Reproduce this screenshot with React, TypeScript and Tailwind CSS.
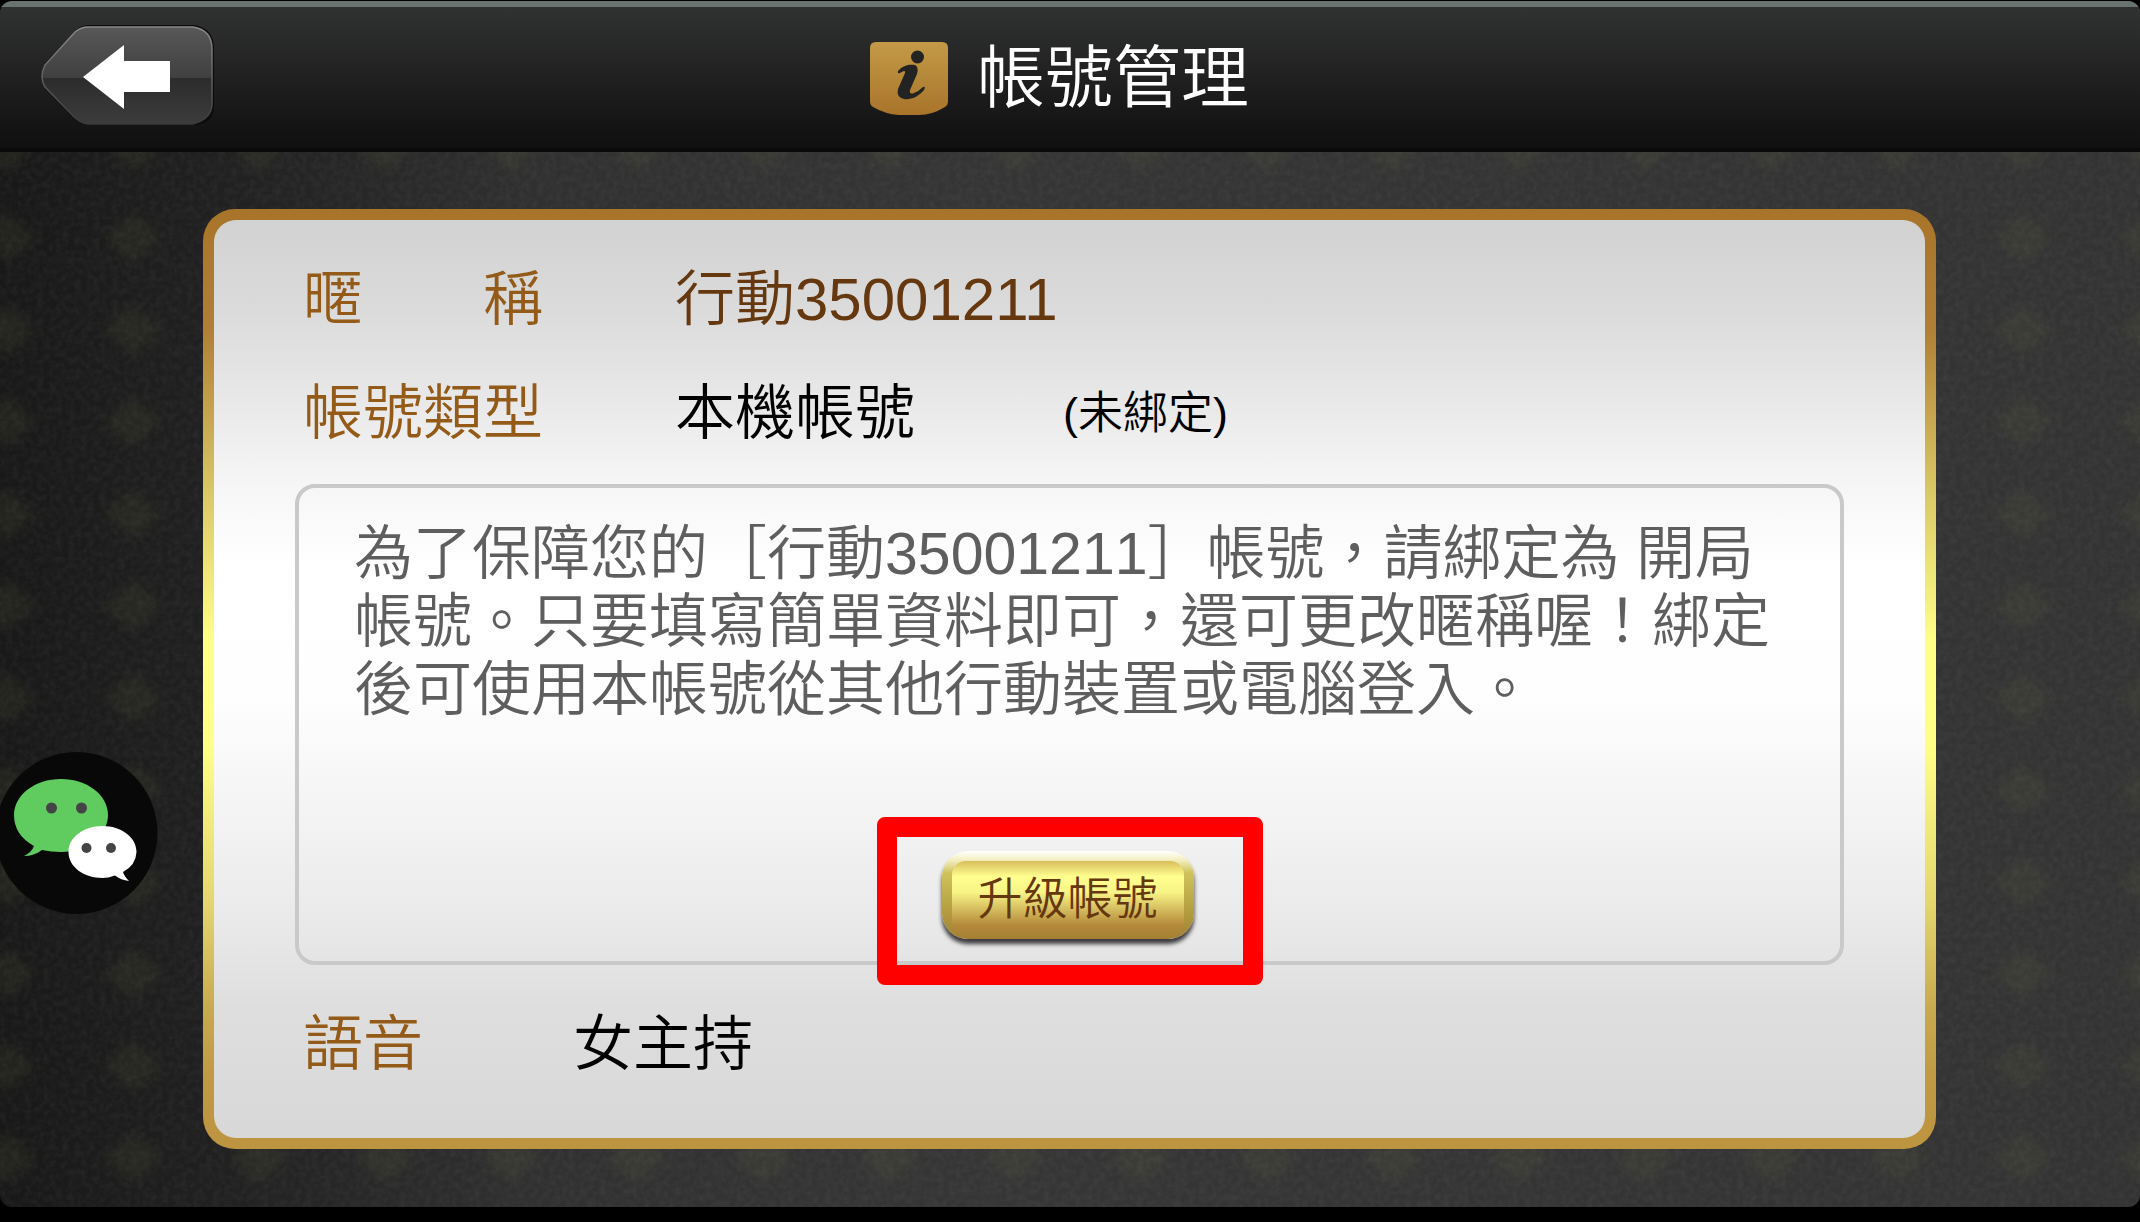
function BackIcon() {
  return (
    <svg viewBox="0 0 176 106" className="h-[106px] w-44" aria-hidden="true">
      <defs>
        <linearGradient id="backFill" x1="0" y1="0" x2="0" y2="1">
          <stop offset="0" stopColor="#585858" />
          <stop offset="0.52" stopColor="#404040" />
          <stop offset="0.53" stopColor="#2c2c2c" />
          <stop offset="1" stopColor="#3c3c3c" />
        </linearGradient>
        <linearGradient id="backEdge" x1="0" y1="0" x2="0" y2="1">
          <stop offset="0" stopColor="#8a8a8a" />
          <stop offset="0.55" stopColor="#5c5c5c" />
          <stop offset="1" stopColor="#3a3a3a" />
        </linearGradient>
      </defs>
      <path d="M49 2H155Q175 5 175 26V84Q174 101 155 102H49Q40 101 34 95L6 66Q-1 54 6 40L36 8Q42 2 49 2Z" fill="#0c0c0c" />
      <path d="M49 4H154Q173 7 173 26V82Q172 96 154 101H49Q41 100 35 94L6 64Q0 54 6 42L36 9Q42 4 49 4Z" fill="url(#backFill)" stroke="url(#backEdge)" strokeWidth="1.6" />
      <path d="M44 54L85 22V38H131V69H85V86Z" fill="#fff" />
    </svg>
  );
}

function InfoIcon() {
  return (
    <svg viewBox="0 0 80 74" className="h-[74px] w-20" aria-hidden="true">
      <defs>
        <linearGradient id="infoFill" x1="0" y1="0" x2="0" y2="1">
          <stop offset="0" stopColor="#c39a47" />
          <stop offset="1" stopColor="#a8742a" />
        </linearGradient>
      </defs>
      <path d="M7 1H73Q79 1 79 7V61Q79 64 76 66Q63 74 50 74H30Q16 73 4 66Q1 64 1 61V7Q1 1 7 1Z" fill="url(#infoFill)" />
      <circle cx="48.5" cy="16" r="6.5" fill="#232323" />
      <path d="M29 30C34 24 41 23 46 24Q50 26 48 33L41 49Q40 54 45 52Q50 50 54 46Q57 45 55 49C49 56 42 59 35 58Q27 56 29 48L36 32Q37 28 31 32Q28 33 29 30Z" fill="#232323" />
    </svg>
  );
}

function ChatIcon() {
  return (
    <svg viewBox="0 0 160 164" className="h-[164px] w-40" aria-hidden="true">
      <circle cx="76.5" cy="82" r="81" fill="#080808" />
      <path d="M61 28C87 28 108 44 108 64S87 101 61 101Q51 101 42 99Q34 105 24 105Q32 101 34 95Q14 84 14 64C14 44 35 28 61 28Z" fill="#60cc5f" />
      <circle cx="51.5" cy="57" r="5.5" fill="#444" />
      <circle cx="81.5" cy="57" r="5.5" fill="#444" />
      <path d="M102.5 75C121 75 136.500 86 136.500 101Q136 114 123 121Q124 125 129 130Q121 129 115 124.500Q108 127 102.500 127C84 127 68.500 116 68.500 101S84 75 102.500 75Z" fill="#fff" />
      <circle cx="86.5" cy="97" r="5" fill="#444" />
      <circle cx="111" cy="97" r="5" fill="#444" />
    </svg>
  );
}

function Texture() {
  return (
    <svg className="absolute inset-0 h-full w-full" aria-hidden="true">
      <defs>
        <filter id="grain" x="0" y="0" width="100%" height="100%">
          <feTurbulence type="fractalNoise" baseFrequency="0.16" numOctaves="3" seed="4" />
          <feColorMatrix type="matrix" values="0 0 0 0 1  0 0 0 0 1  0 0 0 0 1  0.4 0 0 0 -0.12" />
        </filter>
        <filter id="soft">
          <feGaussianBlur stdDeviation="4" />
        </filter>
        <pattern id="diamonds" width="126" height="92" patternUnits="userSpaceOnUse" x="70" y="7">
          <path d="M63 22L90 46L63 70L36 46Z" fill="#6b6b3c" opacity="0.13" filter="url(#soft)" />
        </pattern>
      </defs>
      <rect width="100%" height="100%" fill="url(#diamonds)" />
      <rect width="100%" height="100%" filter="url(#grain)" opacity="0.2" />
    </svg>
  );
}

export default function App() {
  return (
    <div
      lang="zh-Hant"
      className="flex min-h-screen flex-col bg-black pb-[15px] pt-px font-['Liberation_Sans','Noto_Sans_CJK_TC',sans-serif] font-[350]"
    >
      <div className="relative flex grow flex-col overflow-hidden rounded-xl bg-[linear-gradient(90deg,#181818,#202020_10%,#303030_25%,#353535_45%,#333333)]">
        <Texture />
        <header className="relative grid h-[151px] grid-cols-[1fr_auto_1fr] items-center border-b-4 border-t-[6px] border-b-[#0a0a0a] border-t-[#68736f] bg-[linear-gradient(#303231,#222222_45%,#141414_85%,#101010)] pl-[39px] pr-[61px]">
          <button type="button" aria-label="返回" className="w-44 pb-1">
            <BackIcon />
          </button>
          <div className="flex items-center gap-7">
            <InfoIcon />
            <h1 className="text-[68px] leading-[80px] text-white">帳號管理</h1>
          </div>
        </header>

        <main className="relative ml-[203px] mr-[204px] mt-[57px] flex h-[940px] flex-col rounded-[32px] bg-[linear-gradient(#a8742a,#b08036_13%,#dccb68_31%,#ffff87_46%,#ffff87_57%,#e4d56e_74%,#c8aa4e_85%,#c09a45_92%,#bd9440)] p-[11px]">
          <section className="grow rounded-[22px] bg-[linear-gradient(#d2d2d2,#dadada_9%,#e6e6e6_18%,#f6f6f6_29%,#ffffff_38%,#fefefe_52%,#ebebeb_75%,#dedede_86%,#d8d8d8)] pl-[81px] pr-[81px] pt-10">
            <dl className="text-[60px] leading-[80px]">
              <div className="flex px-2">
                <dt className="flex w-60 justify-between text-[#935a18]">
                  <span>暱</span>
                  <span>稱</span>
                </dt>
                <dd className="ml-[132px] text-[#663810]">行動35001211</dd>
              </div>
              <div className="mt-[34px] flex px-2">
                <dt className="w-60 text-[#935a18]">帳號類型</dt>
                <dd className="ml-[132px] flex text-black">
                  本機帳號
                  <span className="ml-[148px] text-[45px]">(未綁定)</span>
                </dd>
              </div>
            </dl>
            <div className="mt-[30px] flex h-[481px] flex-col items-center rounded-[20px] border-4 border-[#c9c9c9] px-[55px] pt-8">
              <p className="w-full whitespace-nowrap text-[59px] leading-[68px] text-[#5e5e5e] [font-kerning:none]">
                為了保障您的［行動35001211］帳號，請綁定為 開局
                <br />
                帳號。只要填寫簡單資料即可，還可更改暱稱喔！綁定
                <br />
                後可使用本帳號從其他行動裝置或電腦登入。
              </p>
              <div className="mt-[93px] flex shrink-0 rounded-lg border-[20px] border-[#ff0000] pb-[26px] pl-[45px] pr-[49px] pt-[14px]">
                <button
                  type="button"
                  className="relative h-[88px] w-[252px] overflow-visible rounded-[26px] bg-[linear-gradient(#ffffff,#f4efc0_9px,#cfc25c_22px,#b9a545_60%,#a37f33)] p-0 text-[45px] text-[#663810] shadow-[0_5px_4px_#3c3c40]"
                >
                  <span className="mx-[10px] mt-[10px] block h-[78px] rounded-t-[14px] rounded-b-[20px] bg-[linear-gradient(#d9bd5c,#ffff8f_20%,#f8f486_40%,#b58a3a_82%,#a37f33)] leading-[78px]">
                    升級帳號
                  </span>
                </button>
              </div>
            </div>
            <dl className="mt-10 flex px-2 text-[60px] leading-[80px]">
              <dt className="text-[#935a18]">語音</dt>
              <dd className="ml-[150px] text-black">女主持</dd>
            </dl>
          </section>
        </main>

        <button type="button" aria-label="WeChat" className="absolute left-0 top-[750px]">
          <ChatIcon />
        </button>
      </div>
    </div>
  );
}
